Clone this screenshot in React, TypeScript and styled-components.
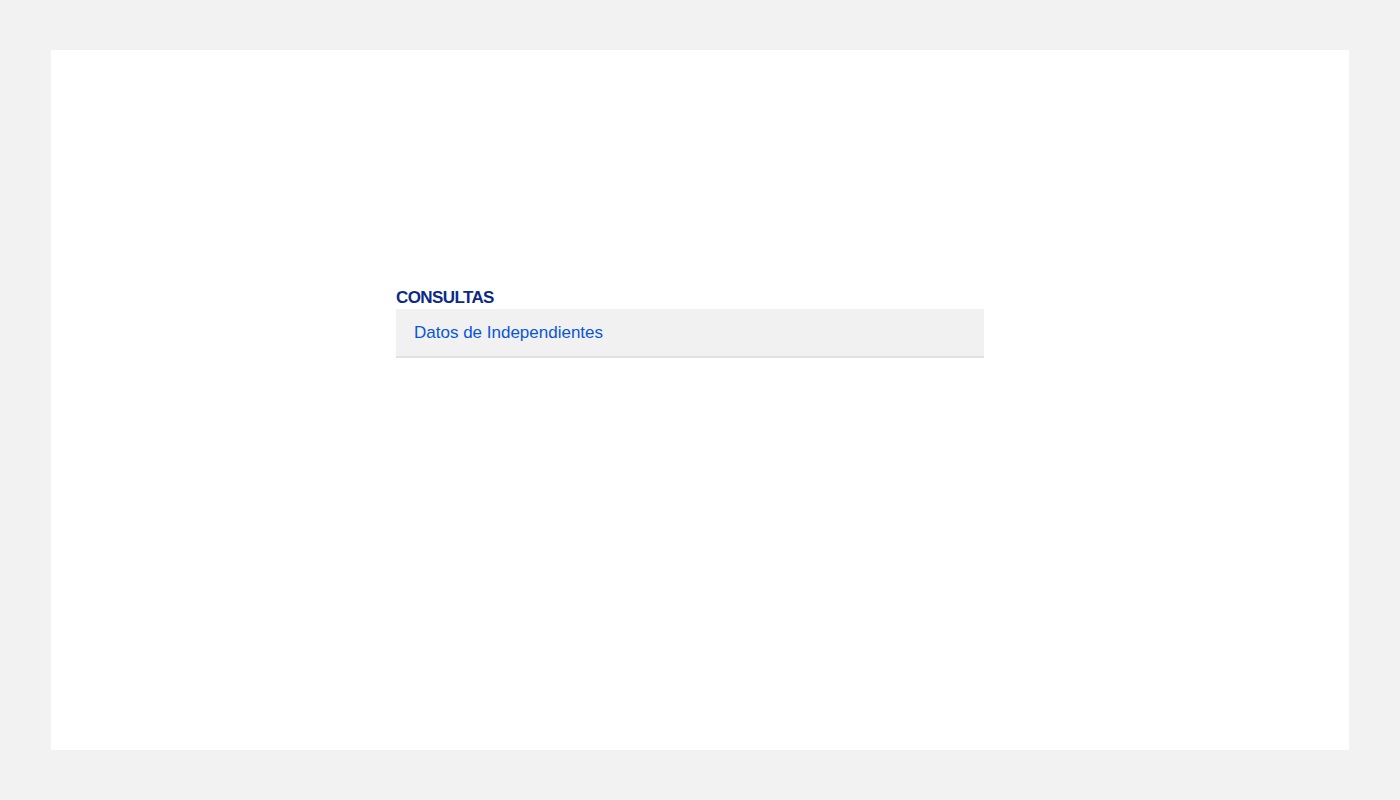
import styled, { createGlobalStyle } from 'styled-components';

const GlobalStyle = createGlobalStyle`
    html, body {
        margin: 0;
        padding: 0;
        background: #f2f2f2;
    }
    body {
        font-family: "Liberation Sans", Arial, sans-serif;
    }
`;

const Page = styled.div`
    padding: 50px 51px;
    min-height: 800px;
    box-sizing: border-box;
`;

const Panel = styled.main`
    background: #ffffff;
    height: 700px;
    padding: 238px 0 0 345px;
    box-sizing: border-box;
`;

const Section = styled.section`
    width: 588px;
`;

const Heading = styled.h2`
    margin: 0 0 2px;
    font-family: "Liberation Sans", Arial, sans-serif;
    font-size: 17px;
    line-height: 19px;
    font-weight: 700;
    letter-spacing: -0.6px;
    color: #0b2a85;
    text-transform: uppercase;
`;

const MenuList = styled.ul`
    list-style: none;
    margin: 0;
    padding: 0;
`;

const MenuItem = styled.li`
    background: #f1f1f1;
    border-bottom: 2px solid #e1e1e1;
    height: 47px;
    display: flex;
    align-items: center;
    padding: 0 18px;
`;

const MenuLink = styled.a`
    font-size: 17px;
    line-height: 20px;
    padding-top: 1px;
    color: #0a56d6;
    text-decoration: none;
    cursor: pointer;
`;

export default function App() {
    const items = ['Datos de Independientes'];
    return (
        <>
            <GlobalStyle />
            <Page>
                <Panel>
                    <Section>
                        <Heading>Consultas</Heading>
                        <MenuList>
                            {items.map(item => (
                                <MenuItem key={item}>
                                    <MenuLink>{item}</MenuLink>
                                </MenuItem>
                            ))}
                        </MenuList>
                    </Section>
                </Panel>
            </Page>
        </>
    );
}
